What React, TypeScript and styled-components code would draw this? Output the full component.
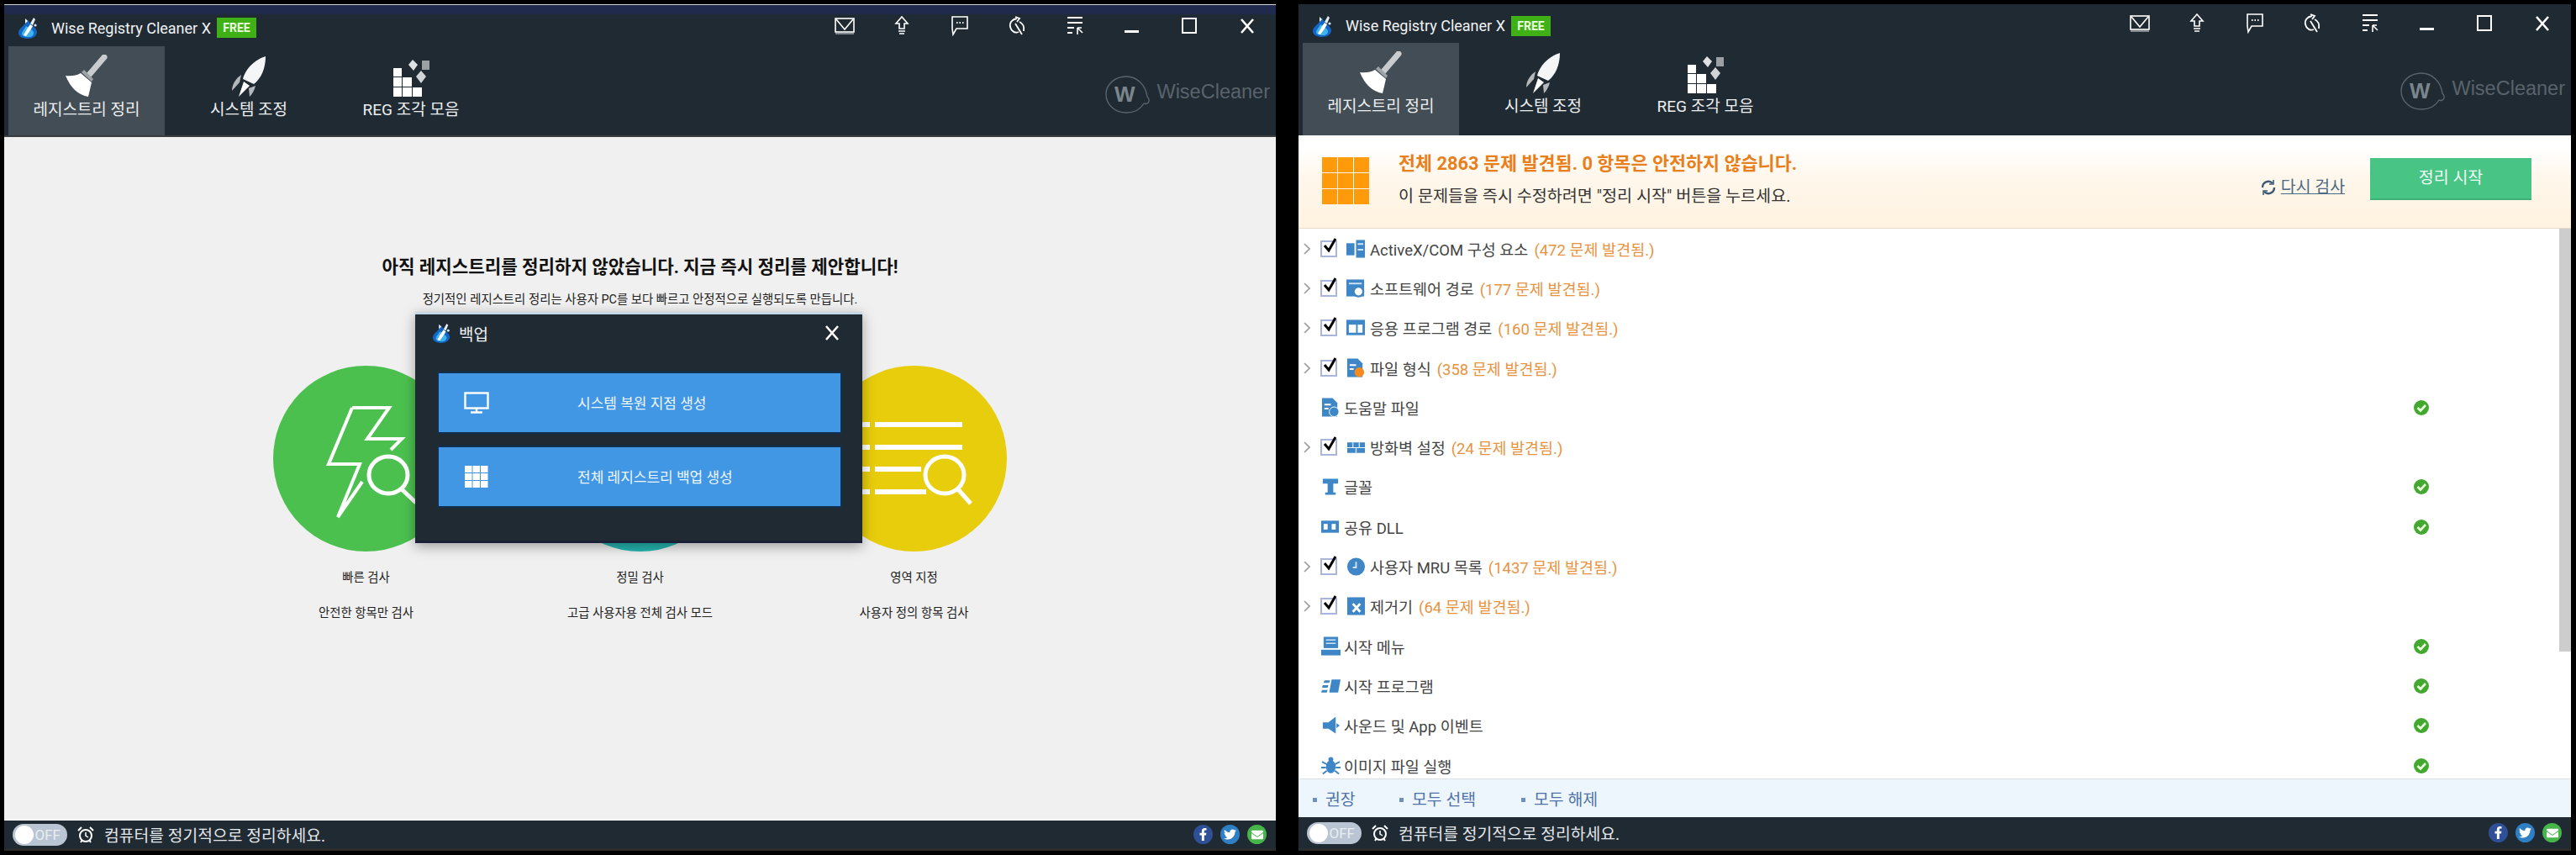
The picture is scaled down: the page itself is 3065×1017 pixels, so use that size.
import React from 'react';
import styled, { createGlobalStyle } from 'styled-components';
import { FaFacebookF, FaTwitter, FaEnvelope } from 'react-icons/fa';

const FONT = `Roboto, "Noto Sans CJK KR", sans-serif`;

const GlobalStyle = createGlobalStyle`
  html, body {
    margin: 0;
    background: #000;
    font-family: ${FONT};
  }
  * { box-sizing: border-box; }
`;

const AppLogo = ({ size = 26 }: { size?: number }) => (
    <svg width={size} height={size} viewBox="0 0 26 26">
        <path d="M13 3 C12 9 2 13 2 19 C2 24 8 26 13 26 C19 26 24 23 24 18 C24 13 15 9 13 3 Z" fill="#1266c4" />
        <path d="M11 11 C9 15 6 18 6 20 C6 23 10 24 14 24 C18 24 20 22 20 19 C20 16 15 14 11 11 Z" fill="#3fb4ee" />
        <path d="M8 22 C10 18 12 14 16 9 L19 11 C17 15 14 19 11 23 Z" fill="#fff" />
        <path d="M16 8 L20 1 L22 3 L19 10 Z" fill="#e6eef6" />
        <path d="M10 2 L13 5 L10 8 Z" fill="#fff" />
        <circle cx="22" cy="10" r="1.6" fill="#cfe6f8" />
    </svg>
);

const BroomIcon = () => (
    <svg width="50" height="50" viewBox="0 0 50 50">
        <path d="M46 3 L28 24" stroke="#c9ccce" strokeWidth="7" strokeLinecap="round" />
        <path d="M22 18 L33 29 L31 32 L19 21 Z" fill="#9ea3a6" />
        <path d="M0 25 Q11 26 18 22 L31 33 Q29 42 27 50 Q9 47 0 25 Z" fill="#fff" />
    </svg>
);

const RocketIcon = () => (
    <svg width="42" height="48" viewBox="0 0 42 48">
        <path d="M41 0 C30 3 17 14 14 27 L27 33 C36 26 41 14 41 0 Z" fill="#f4f5f6" />
        <path d="M12 22 C6 26 1 33 1 41 L10 31 Z" fill="#b4b8bb" />
        <path d="M29 35 C28 40 25 45 22 48 L21 38 Z" fill="#b4b8bb" />
        <path d="M15 30 L22 35 L9 48 Z" fill="#fff" />
    </svg>
);

const BlocksIcon = () => (
    <svg width="46" height="44" viewBox="0 0 46 44">
        <g fill="#fff">
            <rect x="2" y="10" width="10" height="10" />
            <rect x="2" y="21" width="10" height="11" />
            <rect x="13" y="21" width="11" height="11" />
            <rect x="2" y="33" width="10" height="11" />
            <rect x="13" y="33" width="11" height="11" />
            <rect x="25" y="33" width="11" height="11" />
        </g>
        <path d="M25 0 L31 6 L26 13 L20 6 Z" fill="#dfe2e4" />
        <path d="M35 13 L41 20 L35 28 L29 20 Z" fill="#d0d4d6" />
        <rect x="36" y="1" width="9" height="11" fill="#9aa0a4" />
    </svg>
);

const ToolIcon = ({ name }: { name: string }) => {
    switch (name) {
        case 'mail':
            return (
                <svg width="24" height="20" viewBox="0 0 24 20" fill="none" stroke="#fff" strokeWidth="1.6">
                    <rect x="1" y="1" width="22" height="16" />
                    <path d="M2 2 L12 14 L22 2" />
                    <path d="M1 19 H23" stroke="#9aa3aa" />
                </svg>
            );
        case 'update':
            return (
                <svg width="18" height="24" viewBox="0 0 18 24" fill="none" stroke="#fff" strokeWidth="1.6">
                    <path d="M9 1 L2 9 H6 V15 H12 V9 H16 Z" />
                    <path d="M5 18 H13 M6 21 H12" />
                </svg>
            );
        case 'chat':
            return (
                <svg width="22" height="24" viewBox="0 0 22 24" fill="none" stroke="#fff" strokeWidth="1.6">
                    <path d="M2 1 H20 V15 H7 L3 22 L2 15 Z" />
                    <path d="M7 8 H8.5 M10.5 8 H12 M14 8 H15.5" strokeWidth="2" />
                </svg>
            );
        case 'skin':
            return (
                <svg width="22" height="24" viewBox="0 0 22 24" fill="none" stroke="#fff" strokeWidth="1.8">
                    <path d="M11 3 C5 4 2 8 3 13 C4 18 9 21 13 19" />
                    <path d="M9 1 L14 3 L11 7" />
                    <path d="M9 9 L17 22 M14 7 C18 9 20 13 19 18" />
                </svg>
            );
        case 'menu':
            return (
                <svg width="20" height="24" viewBox="0 0 20 24" fill="none" stroke="#fff" strokeWidth="2">
                    <path d="M1 2 H19 M1 8 H19 M1 14 H9 M1 20 H7" />
                    <path d="M13 22 V14 M13 14 L19 20 M13 14 H18" strokeWidth="1.6" />
                </svg>
            );
        case 'min':
            return (
                <svg width="18" height="24" viewBox="0 0 18 24">
                    <rect x="0" y="17" width="17" height="3" fill="#fff" />
                </svg>
            );
        case 'max':
            return (
                <svg width="18" height="20" viewBox="0 0 18 20" fill="none" stroke="#fff" strokeWidth="2">
                    <rect x="1" y="1" width="16" height="17" />
                </svg>
            );
        default:
            return (
                <svg width="18" height="18" viewBox="0 0 18 18" fill="none" stroke="#fff" strokeWidth="2.6">
                    <path d="M2 1 L16 17 M16 1 L2 17" />
                </svg>
            );
    }
};

const WiseLogo = () => (
    <LogoWrap>
        <svg width="54" height="46" viewBox="0 0 54 46" fill="none" stroke="#59636b" strokeWidth="1.4">
            <path d="M46 34 C52 36 54 30 50 26 C48 12 38 2 25 2 C11 2 1 12 1 23 C1 35 11 45 25 45 C34 45 42 41 46 34" />
            <text x="11" y="32" fontFamily={'"Liberation Sans", sans-serif'} fontSize="26" fontWeight="700" fill="#7b858c" stroke="none">W</text>
        </svg>
        <LogoText>WiseCleaner</LogoText>
    </LogoWrap>
);

const Header = ({ compact }: { compact?: boolean }) => (
    <HeaderBox $compact={compact}>
        <TitleBar $compact={compact}>
            <Brand>
                <AppLogo />
                <AppTitle>Wise Registry Cleaner X</AppTitle>
                <FreeBadge>FREE</FreeBadge>
            </Brand>
            <Tools>
                {['mail', 'update', 'chat', 'skin', 'menu', 'min', 'max', 'close'].map((t) => (
                    <ToolButton key={t}>
                        <ToolIcon name={t} />
                    </ToolButton>
                ))}
            </Tools>
        </TitleBar>
        <TabBar>
            <Tab $active>
                <TabIcon><BroomIcon /></TabIcon>
                레지스트리 정리
            </Tab>
            <Tab>
                <TabIcon><RocketIcon /></TabIcon>
                시스템 조정
            </Tab>
            <Tab>
                <TabIcon><BlocksIcon /></TabIcon>
                REG 조각 모음
            </Tab>
            <WiseLogo />
        </TabBar>
    </HeaderBox>
);

const Footer = ({ compact }: { compact?: boolean }) => (
    <FooterBar $compact={compact}>
        <Toggle>
            <Knob />
            OFF
        </Toggle>
        <svg width="22" height="22" viewBox="0 0 22 22" fill="none" stroke="#fff" strokeWidth="2">
            <circle cx="11" cy="12" r="7" />
            <path d="M11 8 V12 L14 14" strokeWidth="1.5" />
            <path d="M2 6 L6 2 M20 6 L16 2 M5 20 L7 17 M17 20 L15 17" />
        </svg>
        <FooterText>컴퓨터를 정기적으로 정리하세요.</FooterText>
        <Socials>
            <Social $bg="#2f4f96"><FaFacebookF size={15} /></Social>
            <Social $bg="#2f7fc4"><FaTwitter size={15} /></Social>
            <Social $bg="#46b54a"><FaEnvelope size={14} /></Social>
        </Socials>
    </FooterBar>
);

const scans = [
    { name: '빠른 검사', desc: '안전한 항목만 검사', color: '#4cc04f', kind: 'bolt' },
    { name: '정밀 검사', desc: '고급 사용자용 전체 검사 모드', color: '#25b5b0', kind: 'deep' },
    { name: '영역 지정', desc: '사용자 정의 항목 검사', color: '#e8cd0c', kind: 'list' },
];

const ScanIcon = ({ kind }: { kind: string }) => (
    <svg width="221" height="221" viewBox="0 0 221 221" fill="none" stroke="#fff" strokeWidth="4">
        {kind === 'bolt' && (
            <>
                <path d="M94 50 H138 L112 87 H153 L140 100" />
                <path d="M94 50 L66 117 H103 L77 180 L106 138" />
                <ellipse cx="137" cy="130" rx="23" ry="22" strokeWidth="5" />
                <path d="M153 147 L170 163" strokeWidth="5" />
            </>
        )}
        {kind === 'list' && (
            <>
                <path d="M64 70 H168 M64 97 H168 M64 123 H119 M64 150 H125" strokeWidth="6" />
                <path d="M43 70 H58 M43 97 H58 M43 123 H58 M43 150 H58" strokeWidth="6" />
                <ellipse cx="147" cy="130" rx="23" ry="22" strokeWidth="5" />
                <path d="M163 147 L178 164" strokeWidth="5" />
            </>
        )}
        {kind === 'deep' && (
            <>
                <circle cx="100" cy="100" r="40" />
                <ellipse cx="137" cy="130" rx="23" ry="22" strokeWidth="5" />
            </>
        )}
    </svg>
);

const StartPane = () => (
    <StartContent>
        <StartHeading>아직 레지스트리를 정리하지 않았습니다. 지금 즉시 정리를 제안합니다!</StartHeading>
        <StartSub>정기적인 레지스트리 정리는 사용자 PC를 보다 빠르고 안정적으로 실행되도록 만듭니다.</StartSub>
        <ScanGrid>
            {scans.map((s) => (
                <ScanCard key={s.name}>
                    <ScanCircle $color={s.color}>
                        <ScanIcon kind={s.kind} />
                    </ScanCircle>
                    <ScanName>{s.name}</ScanName>
                    <ScanDesc>{s.desc}</ScanDesc>
                </ScanCard>
            ))}
        </ScanGrid>
        <Modal>
            <ModalHead>
                <AppLogo size={24} />
                <ModalTitle>백업</ModalTitle>
                <ModalClose>
                    <ToolIcon name="close" />
                </ModalClose>
            </ModalHead>
            <ModalBody>
                <ModalButton>
                    <svg width="30" height="26" viewBox="0 0 30 26" fill="none" stroke="#fff" strokeWidth="2.4">
                        <rect x="1.5" y="1.5" width="27" height="18" />
                        <path d="M15 20 V24 M8 24.5 H22" />
                    </svg>
                    <ModalButtonText>시스템 복원 지점 생성</ModalButtonText>
                </ModalButton>
                <ModalButton>
                    <svg width="30" height="26" viewBox="0 0 30 26" fill="#fff">
                        <rect x="1" y="0" width="8.5" height="8" />
                        <rect x="10.5" y="0" width="8.5" height="8" />
                        <rect x="20" y="0" width="8.5" height="8" />
                        <rect x="1" y="9" width="8.5" height="8" />
                        <rect x="10.5" y="9" width="8.5" height="8" />
                        <rect x="20" y="9" width="8.5" height="8" />
                        <rect x="1" y="18" width="8.5" height="8" />
                        <rect x="10.5" y="18" width="8.5" height="8" />
                        <rect x="20" y="18" width="8.5" height="8" />
                    </svg>
                    <ModalButtonText>전체 레지스트리 백업 생성</ModalButtonText>
                </ModalButton>
            </ModalBody>
        </Modal>
    </StartContent>
);

const B = '#3f86c6';

const RowIcon = ({ name }: { name: string }) => {
    const body: Record<string, React.ReactNode> = {
        activex: (
            <>
                <rect x="0" y="5" width="10" height="15" fill={B} />
                <rect x="12" y="1" width="11" height="22" fill={B} />
                <path d="M14 6 H21 M14 13 H21" stroke="#cfe3f5" strokeWidth="2" />
            </>
        ),
        software: (
            <>
                <rect x="0" y="1" width="22" height="21" fill={B} />
                <rect x="3" y="5" width="16" height="2" fill="#cfe3f5" />
                <circle cx="15" cy="16" r="6" fill="#fff" stroke={B} strokeWidth="2.5" />
            </>
        ),
        app: (
            <>
                <rect x="0" y="2" width="23" height="19" fill={B} />
                <rect x="3" y="8" width="9" height="10" fill="#fff" />
                <rect x="14" y="8" width="6" height="10" fill="#fff" />
            </>
        ),
        file: (
            <>
                <path d="M1 0 H14 L20 6 V23 H1 Z" fill={B} />
                <path d="M4 8 H12 M4 13 H9" stroke="#fff" strokeWidth="2" />
                <circle cx="16" cy="17" r="6" fill="#f58a1f" />
            </>
        ),
        help: (
            <>
                <path d="M1 0 H14 L20 6 V23 H1 Z" fill={B} />
                <path d="M4 8 H12 M4 13 H9" stroke="#fff" strokeWidth="2" />
                <circle cx="16" cy="17" r="6" fill={B} stroke="#fff" strokeWidth="1" />
            </>
        ),
        firewall: (
            <>
                <rect x="1" y="6" width="22" height="6" fill={B} />
                <rect x="1" y="13" width="22" height="6" fill={B} />
                <path d="M8 6 V12 M16 6 V12 M12 13 V19" stroke="#cfe3f5" strokeWidth="1.5" />
            </>
        ),
        font: <path d="M2 2 H21 V8 H15 V19 H18 V22 H5 V19 H8 V8 H2 Z" fill={B} />,
        dll: (
            <>
                <rect x="0" y="4" width="22" height="15" fill={B} />
                <rect x="3" y="8" width="5" height="7" fill="#fff" />
                <rect x="13" y="8" width="5" height="7" fill="#fff" />
            </>
        ),
        mru: (
            <>
                <circle cx="12" cy="12" r="11" fill={B} />
                <path d="M12 6 V13 H8" stroke="#cfe3f5" strokeWidth="2" fill="none" />
            </>
        ),
        uninstall: (
            <>
                <rect x="1" y="1" width="22" height="22" fill={B} />
                <path d="M8 9 L17 19 M17 9 L8 19" stroke="#fff" strokeWidth="3" />
            </>
        ),
        startmenu: (
            <>
                <rect x="3" y="0" width="18" height="14" fill={B} />
                <path d="M6 4 H18 M6 8 H18" stroke="#cfe3f5" strokeWidth="1.5" />
                <rect x="0" y="16" width="24" height="7" fill={B} />
            </>
        ),
        startup: (
            <>
                <path d="M4 5 H11 L10 8 H3 Z M2 11 H9 L8 14 H1 Z M1 17 H8 L7 20 H0 Z" fill={B} />
                <path d="M13 4 H24 L21 20 H10 Z" fill={B} />
            </>
        ),
        sound: <path d="M2 8 H9 L18 1 V22 L9 16 H2 Z M19 9 L23 12 L19 15 Z" fill={B} />,
        image: (
            <>
                <ellipse cx="12" cy="13" rx="6" ry="8" fill={B} />
                <circle cx="12" cy="4" r="3" fill={B} />
                <path d="M1 7 L7 10 M23 7 L17 10 M0 14 H6 M24 14 H18 M2 22 L7 18 M22 22 L17 18" stroke={B} strokeWidth="2" />
            </>
        ),
    };
    return (
        <svg width="23" height="24" viewBox="0 0 24 24">
            {body[name]}
        </svg>
    );
};

const rows = [
    { icon: 'activex', label: 'ActiveX/COM 구성 요소', count: '(472 문제 발견됨.)' },
    { icon: 'software', label: '소프트웨어 경로', count: '(177 문제 발견됨.)' },
    { icon: 'app', label: '응용 프로그램 경로', count: '(160 문제 발견됨.)' },
    { icon: 'file', label: '파일 형식', count: '(358 문제 발견됨.)' },
    { icon: 'help', label: '도움말 파일' },
    { icon: 'firewall', label: '방화벽 설정', count: '(24 문제 발견됨.)' },
    { icon: 'font', label: '글꼴' },
    { icon: 'dll', label: '공유 DLL' },
    { icon: 'mru', label: '사용자 MRU 목록', count: '(1437 문제 발견됨.)' },
    { icon: 'uninstall', label: '제거기', count: '(64 문제 발견됨.)' },
    { icon: 'startmenu', label: '시작 메뉴' },
    { icon: 'startup', label: '시작 프로그램' },
    { icon: 'sound', label: '사운드 및 App 이벤트' },
    { icon: 'image', label: '이미지 파일 실행' },
];

const ResultRow = ({ row }: { row: (typeof rows)[number] }) => (
    <Row>
        {row.count ? (
            <>
                <Chevron>
                    <svg width="8" height="14" viewBox="0 0 8 14" fill="none" stroke="#9a9a9a" strokeWidth="1.6">
                        <path d="M1 1 L7 7 L1 13" />
                    </svg>
                </Chevron>
                <CheckBox>
                    <svg width="18" height="20" viewBox="0 0 18 20" fill="none" stroke="#000" strokeWidth="3">
                        <path d="M3 9 L8 15 L16 1" />
                    </svg>
                </CheckBox>
            </>
        ) : (
            <Chevron $plain />
        )}
        <RowIconBox $checked={!!row.count}>
            <RowIcon name={row.icon} />
        </RowIconBox>
        <RowLabel>{row.label}</RowLabel>
        {row.count && <RowCount>{row.count}</RowCount>}
        {!row.count && (
            <OkMark>
                <svg width="18" height="18" viewBox="0 0 18 18">
                    <circle cx="9" cy="9" r="9" fill="#43a82f" />
                    <path d="M4.5 9 L8 12.5 L14 6" fill="none" stroke="#eaffdc" strokeWidth="2.6" />
                </svg>
            </OkMark>
        )}
    </Row>
);

const ResultPane = () => (
    <>
        <Banner>
            <BannerGrid>
                {Array.from({ length: 9 }).map((_, i) => (
                    <BannerCell key={i} />
                ))}
            </BannerGrid>
            <BannerText>
                <BannerTitle>전체 2863 문제 발견됨. 0 항목은 안전하지 않습니다.</BannerTitle>
                <BannerSub>이 문제들을 즉시 수정하려면 "정리 시작" 버튼을 누르세요.</BannerSub>
            </BannerText>
            <Rescan>
                <svg width="20" height="20" viewBox="0 0 20 20" fill="none" stroke="#3d5a75" strokeWidth="2.4">
                    <path d="M3 10 A7 7 0 0 1 15 5 M17 10 A7 7 0 0 1 5 15" />
                    <path d="M16 1 V6 H11 M4 19 V14 H9" strokeWidth="1.6" />
                </svg>
                <RescanLink>다시 검사</RescanLink>
            </Rescan>
            <CleanButton>정리 시작</CleanButton>
        </Banner>
        <ListArea>
            <List>
                {rows.map((r) => (
                    <ResultRow key={r.icon} row={r} />
                ))}
            </List>
            <ScrollTrack>
                <ScrollThumb />
            </ScrollTrack>
        </ListArea>
        <SelectBar>
            <SelectLink $width={103}>권장</SelectLink>
            <SelectLink $width={145}>모두 선택</SelectLink>
            <SelectLink $width={145}>모두 해제</SelectLink>
        </SelectBar>
    </>
);

export default function App() {
    return (
        <Page>
            <GlobalStyle />
            <Window $width={1513}>
                <Header />
                <StartPane />
                <Footer />
            </Window>
            <Window $width={1514}>
                <Header compact />
                <ResultPane />
                <Footer compact />
            </Window>
        </Page>
    );
}

// Styles
const Page = styled.div`
  width: 3065px;
  height: 1017px;
  padding: 5px 0 0 5px;
  display: flex;
  gap: 27px;
  background: #000;
  overflow: hidden;
`;

const Window = styled.div<{ $width: number }>`
  width: ${(p) => p.$width}px;
  height: 1007px;
  display: flex;
  flex-direction: column;
  background: #fff;
`;

const HeaderBox = styled.div<{ $compact?: boolean }>`
  height: ${(p) => (p.$compact ? 156 : 158)}px;
  flex: none;
  background: ${(p) => (p.$compact ? '#202a33' : 'linear-gradient(#1f2a4c 0, #1f2a4c 10px, #202a33 12px)')};
  border-top: ${(p) => (p.$compact ? 'none' : '1px solid #cfd3d6')};
  border-bottom: ${(p) => (p.$compact ? 'none' : '2px solid #3a3d40')};
  display: flex;
  flex-direction: column;
`;

const TitleBar = styled.div<{ $compact?: boolean }>`
  height: ${(p) => (p.$compact ? 46 : 49)}px;
  flex: none;
  display: flex;
  align-items: center;
  justify-content: space-between;
`;

const Brand = styled.div`
  display: flex;
  align-items: center;
  padding: 5px 0 0 15px;
`;

const AppTitle = styled.span`
  margin-left: 15px;
  font-size: 18px;
  color: #f0f2f3;
  white-space: nowrap;
`;

const FreeBadge = styled.span`
  margin-left: 7px;
  width: 47px;
  height: 24px;
  background: #3fb015;
  color: #eaffdf;
  font-size: 14px;
  font-weight: 700;
  line-height: 24px;
  text-align: center;
`;

const Tools = styled.div`
  display: flex;
  align-items: center;
`;

const ToolButton = styled.div`
  width: 68.4px;
  height: 30px;
  display: flex;
  align-items: center;
  justify-content: center;
`;

const TabBar = styled.div`
  flex: 1;
  display: flex;
  padding-left: 5px;
  gap: 7px;
`;

const Tab = styled.div<{ $active?: boolean }>`
  width: 186px;
  padding-top: 10px;
  display: flex;
  flex-direction: column;
  align-items: center;
  background: ${(p) => (p.$active ? '#434d55' : 'transparent')};
  color: #eceeef;
  font-size: 19px;
  line-height: 24px;
  white-space: nowrap;
`;

const TabIcon = styled.div`
  height: 50px;
  margin-bottom: 4px;
  display: flex;
  align-items: flex-end;
  justify-content: center;
`;

const LogoWrap = styled.div`
  margin-left: auto;
  padding: 34px 7px 0 0;
  display: flex;
  align-items: flex-start;
  gap: 7px;
`;

const LogoText = styled.span`
  margin-top: 2px;
  font-family: "Liberation Sans", sans-serif;
  font-size: 23.5px;
  line-height: 36px;
  color: #59636b;
`;

const FooterBar = styled.div<{ $compact?: boolean }>`
  height: ${(p) => (p.$compact ? 40 : 37)}px;
  flex: none;
  padding: 0 11px 0 10px;
  display: flex;
  align-items: center;
  background: #202a33;
  border-top: ${(p) => (p.$compact ? 'none' : '1px solid #fff')};
  border-bottom: 3px solid #2c2c2c;
`;

const Toggle = styled.div`
  width: 65px;
  height: 26px;
  margin-right: 11px;
  padding-right: 8px;
  border-radius: 13px;
  background: #b9c5d2;
  color: #e9eef3;
  font-size: 17px;
  line-height: 26px;
  text-align: right;
  position: relative;
`;

const Knob = styled.span`
  position: absolute;
  left: 3px;
  top: 2px;
  width: 22px;
  height: 22px;
  border-radius: 50%;
  background: #fff;
`;

const FooterText = styled.span`
  margin-left: 11px;
  font-size: 19.3px;
  color: #e3e6e8;
`;

const Socials = styled.div`
  margin-left: auto;
  display: flex;
  gap: 9px;
`;

const Social = styled.span<{ $bg: string }>`
  width: 23px;
  height: 23px;
  border-radius: 50%;
  background: ${(p) => p.$bg};
  color: #fff;
  display: flex;
  align-items: center;
  justify-content: center;
`;

const StartContent = styled.div`
  flex: 1;
  position: relative;
  background: #f0f0f0;
  display: flex;
  flex-direction: column;
  align-items: center;
  padding-top: 140px;
`;

const StartHeading = styled.div`
  font-size: 21.2px;
  font-weight: 700;
  line-height: 30px;
  color: #111;
`;

const StartSub = styled.div`
  margin-top: 14px;
  font-size: 14.4px;
  line-height: 20px;
  color: #222;
`;

const ScanGrid = styled.div`
  margin-top: 68px;
  display: grid;
  grid-template-columns: repeat(3, 326px);
`;

const ScanCard = styled.div`
  display: flex;
  flex-direction: column;
  align-items: center;
`;

const ScanCircle = styled.div<{ $color: string }>`
  width: 221px;
  height: 221px;
  border-radius: 50%;
  background: ${(p) => p.$color};
`;

const ScanName = styled.div`
  margin-top: 22px;
  font-size: 14.4px;
  line-height: 20px;
  color: #222;
`;

const ScanDesc = styled.div`
  margin-top: 22px;
  font-size: 14.4px;
  line-height: 20px;
  color: #222;
`;

const Modal = styled.div`
  position: absolute;
  left: 489px;
  top: 208px;
  width: 532px;
  height: 275px;
  background: #202a33;
  border-top: 3px solid #c6d7e6;
  border-bottom: 3px solid #1b2038;
  box-shadow: 0 4px 14px rgba(0, 0, 0, 0.35);
  display: flex;
  flex-direction: column;
`;

const ModalHead = styled.div`
  height: 44px;
  padding: 0 27px 0 19px;
  display: flex;
  align-items: center;
`;

const ModalTitle = styled.span`
  margin-left: 9px;
  font-size: 19px;
  color: #f0f2f3;
`;

const ModalClose = styled.div`
  margin-left: auto;
  display: flex;
`;

const ModalBody = styled.div`
  padding: 26px 26px 0 28px;
  display: flex;
  flex-direction: column;
  gap: 18px;
`;

const ModalButton = styled.div`
  height: 70px;
  padding-left: 30px;
  background: #4297e5;
  box-shadow: 0 0 0 2px #10304f;
  display: flex;
  align-items: center;
`;

const ModalButtonText = styled.span`
  margin: -2px 0 0 105px;
  font-size: 17px;
  color: #eef6fd;
`;

const Banner = styled.div`
  height: 111px;
  flex: none;
  padding: 26px 47px 0 28px;
  display: flex;
  align-items: flex-start;
  background: linear-gradient(#fff 0, #fff 14%, #fff7ec 45%, #fff3e0 100%);
  border-bottom: 1px solid #e6dccb;
`;

const BannerGrid = styled.div`
  width: 56px;
  height: 56px;
  flex: none;
  margin-right: 35px;
  display: grid;
  grid-template-columns: repeat(3, 1fr);
  grid-template-rows: repeat(3, 1fr);
  gap: 1px;
`;

const BannerCell = styled.span`
  background: #ff9a0a;
`;

const BannerText = styled.div`
  margin-top: -4px;
  display: flex;
  flex-direction: column;
  gap: 15px;
`;

const BannerTitle = styled.div`
  font-size: 21.8px;
  font-weight: 700;
  line-height: 24px;
  color: #e97f1b;
`;

const BannerSub = styled.div`
  font-size: 19.6px;
  line-height: 24px;
  color: #333;
`;

const Rescan = styled.div`
  margin: 24px 30px 0 auto;
  display: flex;
  align-items: center;
  gap: 5px;
`;

const RescanLink = styled.span`
  font-size: 19.4px;
  line-height: 24px;
  color: #4a6a85;
  text-decoration: underline;
`;

const CleanButton = styled.div`
  width: 192px;
  height: 50px;
  margin-top: 1px;
  background: #48c585;
  border-bottom: 2px solid #3fb078;
  color: #f2fff8;
  font-size: 19.5px;
  line-height: 48px;
  text-align: center;
`;

const ListArea = styled.div`
  flex: 1;
  min-height: 0;
  display: flex;
`;

const List = styled.div`
  flex: 1;
  min-width: 0;
  overflow: hidden;
`;

const Row = styled.div`
  height: 47.3px;
  padding: 0 155px 0 5px;
  display: flex;
  align-items: center;
`;

const Chevron = styled.span<{ $plain?: boolean }>`
  width: ${(p) => (p.$plain ? 22 : 21)}px;
  flex: none;
  padding-left: 1px;
  display: flex;
`;

const CheckBox = styled.span`
  width: 20px;
  height: 20px;
  flex: none;
  margin-right: 11px;
  border: 2px solid #a9b5dc;
  position: relative;
  background: #fff;

  svg {
    position: absolute;
    left: 0;
    top: -5px;
  }
`;

const RowIconBox = styled.span<{ $checked: boolean }>`
  width: 23px;
  height: 24px;
  flex: none;
  margin-right: ${(p) => (p.$checked ? 5 : 4)}px;
`;

const RowLabel = styled.span`
  font-size: 18.5px;
  color: #444;
  white-space: nowrap;
`;

const RowCount = styled.span`
  margin-left: 7px;
  font-size: 18.5px;
  color: #e8933f;
  white-space: nowrap;
`;

const OkMark = styled.span`
  margin-left: auto;
  display: flex;
`;

const ScrollTrack = styled.div`
  width: 14px;
  flex: none;
  background: #fff;
`;

const ScrollThumb = styled.div`
  height: 503px;
  background: #cdcdcd;
`;

const SelectBar = styled.div`
  height: 46px;
  flex: none;
  padding-left: 17px;
  display: flex;
  align-items: center;
  background: #eef6fd;
  border-top: 1px solid #dcdfe2;
`;

const SelectLink = styled.span<{ $width: number }>`
  width: ${(p) => p.$width}px;
  font-size: 19.4px;
  color: #4f73a8;
  white-space: nowrap;

  &::before {
    content: '';
    display: inline-block;
    width: 5px;
    height: 5px;
    margin: 0 10px 4px 0;
    background: #6f8fbd;
  }
`;
